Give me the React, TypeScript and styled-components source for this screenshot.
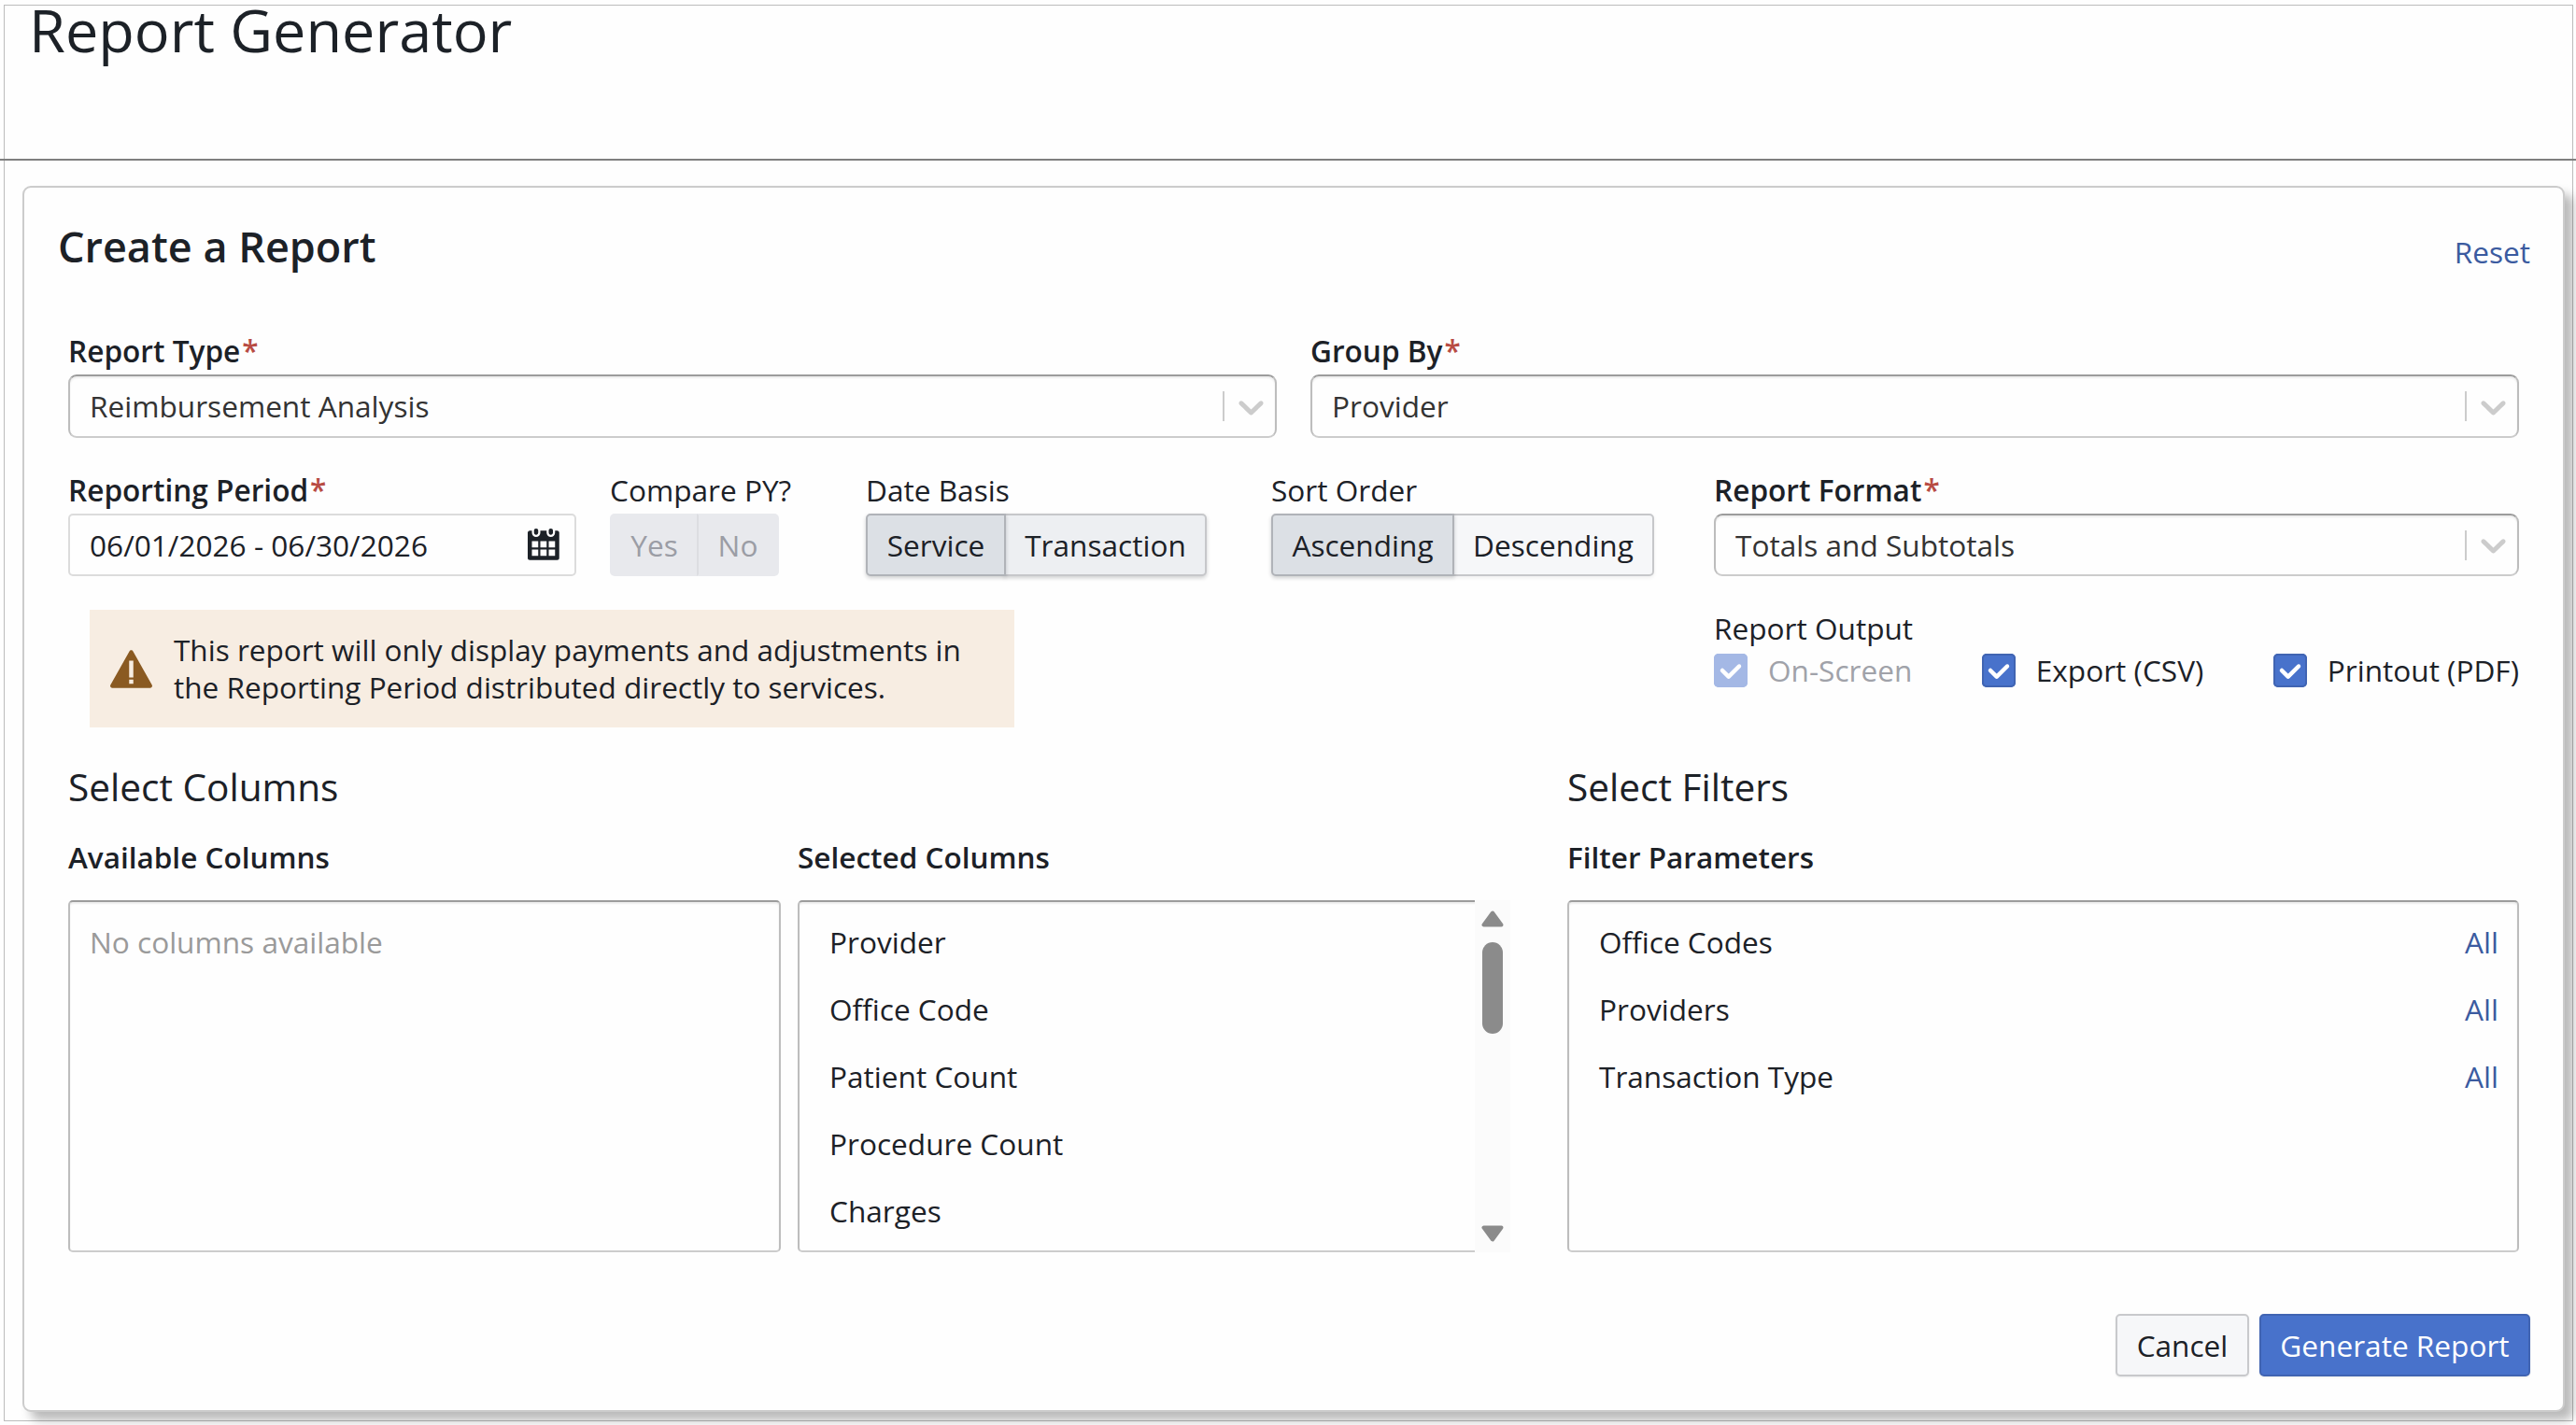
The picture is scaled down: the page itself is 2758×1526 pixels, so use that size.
import React from 'react';
import styled, { createGlobalStyle, css } from 'styled-components';

const GlobalStyle = createGlobalStyle`
    * {
        box-sizing: border-box;
    }

    body {
        margin: 0;
        background: #fefefe;
        color: #1c2127;
        font-family: 'Open Sans', 'Noto Sans', sans-serif;
        font-size: 31.6px;
        line-height: 40px;
        white-space: nowrap;
    }
`

const Page = styled.div`
    height: 1526px;
    padding: 5px 3px 0 4px;
    overflow: hidden;
`

const Frame = styled.div`
    height: 1517px;
    border: 1px solid #bcbcbc;
`

const TopBar = styled.header`
    height: 166px;
    margin: 0 -4px 0 -5px;
    padding-left: 31px;
    border-bottom: 2px solid #7f7f7f;
`

const PageTitle = styled.h1`
    margin: 0;
    font-size: 63px;
    font-weight: 400;
    line-height: 51px;
`

const Card = styled.main`
    width: 2722px;
    height: 1313px;
    margin: 27px 0 0 19px;
    padding-top: 33px;
    background: #fefefe;
    border: 2px solid #cccccc;
    border-radius: 9px;
    box-shadow: 9px 9px 11px rgba(0, 0, 0, 0.27);
`

const CardHeader = styled.div`
    display: flex;
    align-items: center;
    justify-content: space-between;
    height: 60px;
    padding: 0 35px 0 36px;
`

const CardTitle = styled.h2`
    margin: 0;
    font-size: 45px;
    font-weight: 600;
    line-height: 60px;
`

const Link = styled.a`
    color: #3b5ba0;
    text-decoration: none;
    cursor: pointer;
`

const ResetLink = styled(Link)`
    padding-top: 11px;
`

const Form = styled.div`
    display: flex;
    flex-direction: column;
    gap: 36px;
    padding: 62px 47px 0;
`

const TypeRow = styled.div`
    display: grid;
    grid-template-columns: 1fr 1fr;
    gap: 36px;
`

const OptionsRow = styled.div`
    display: grid;
    grid-template-columns: 544px 238px 398px 438px 1fr;
    gap: 36px;
`

const NoticeRow = styled.div`
    display: flex;
    justify-content: space-between;
    height: 126px;
    padding-left: 23px;
`

const FieldLabel = styled.div<{ $required?: boolean }>`
    margin-bottom: 5px;
    font-weight: ${(props) => (props.$required ? 600 : 400)};
`

const Asterisk = styled.span`
    margin-left: 2px;
    color: #b84c44;
`

const SelectBox = styled.div<{ $height: number }>`
    display: flex;
    align-items: center;
    height: ${(props) => props.$height}px;
    padding: 0 3px 0 21px;
    color: #333333;
    border: 2px solid;
    border-color: #9c9c9c #bdbdbd #cccccc;
    border-radius: 9px;
    box-shadow: inset 0 2px 2px rgba(0, 0, 0, 0.07);
`

const SelectValue = styled.span`
    flex: 1;
`

const SelectDivider = styled.span`
    width: 2px;
    height: 32px;
    margin-right: 6px;
    background: #cccccc;
`

const DateInput = styled.div`
    display: flex;
    align-items: center;
    justify-content: space-between;
    height: 67px;
    padding: 0 14px 0 21px;
    border: 2px solid #dcdcdc;
    border-radius: 5px;
`

const ButtonGroup = styled.div`
    display: flex;
`

const ToggleButton = styled.button<{ $width: number; $active?: boolean; $soft?: boolean }>`
    width: ${(props) => props.$width}px;
    height: 67px;
    padding: 0;
    font: inherit;
    color: #1c2127;
    background: ${(props) => (props.$soft ? '#edeff2' : '#f6f7f9')};
    border: 2px solid #c6c7ca;
    border-radius: 0 5px 5px 0;
    box-shadow: 0 2px 4px rgba(17, 20, 24, ${(props) => (props.$soft ? 0.2 : 0.06)});

    &:first-child {
        border-radius: 5px 0 0 5px;
    }

    &:not(:first-child) {
        margin-left: -2px;
    }

    ${(props) => props.$active && css`
        position: relative;
        background: #dce0e5;
        border-color: #b0b3b8;
        box-shadow: 0 2px 4px rgba(17, 20, 24, 0.2);
    `}

    &:disabled {
        color: #9b9da5;
        background: #e8e9ed;
        border-color: #e8e9ed;
        box-shadow: none;
    }

    &:disabled:not(:first-child) {
        border-left-color: #dcdde1;
    }
`

const Notice = styled.div`
    display: flex;
    align-items: center;
    gap: 23px;
    width: 990px;
    padding-left: 22px;
    font-size: 31.54px;
    background: #f7ede2;
`

const Output = styled.div`
    width: 862px;
`

const CheckList = styled.div`
    display: flex;
    justify-content: space-between;
    height: 36px;
    margin-top: 7px;
`

const CheckLabel = styled.label<{ $disabled?: boolean }>`
    display: flex;
    align-items: center;
    gap: 22px;
    color: ${(props) => (props.$disabled ? '#a0a2a9' : '#1c2127')};
`

const CheckMark = styled.span<{ $disabled?: boolean }>`
    display: flex;
    width: 36px;
    height: 36px;
    background: ${(props) => (props.$disabled ? '#a4b8e5' : '#4872cb')};
    border-radius: 5px;
    box-shadow: inset 0 0 0 2px ${(props) => (props.$disabled ? '#a4b8e5' : '#4064b2')};
`

const Lists = styled.div`
    display: grid;
    grid-template-columns: 763px 763px 1fr;
    column-gap: 18px;
    padding: 38px 47px 0;
`

const FilterColumn = styled.section`
    margin-left: 43px;
`

const SectionTitle = styled.h3`
    height: 50px;
    margin: 0;
    font-size: 40.6px;
    font-weight: 400;
    line-height: 51px;
`

const ListTitle = styled.h4`
    margin: 31px 0 26px;
    font-size: 31.5px;
    font-weight: 600;
`

const ListBox = styled.div<{ $scroll?: boolean }>`
    display: flex;
    height: 377px;
    border: 2px solid;
    border-color: #9c9c9c #bdbdbd #cccccc;
    border-radius: 5px;
    box-shadow: inset 0 2px 2px rgba(0, 0, 0, 0.07);

    ${(props) => props.$scroll && css`
        border-right: none;
        border-radius: 5px 0 0 5px;
    `}
`

const Items = styled.ul`
    flex: 1;
    margin: 0;
    padding: 7px 20px 0 32px;
    list-style: none;
`

const Item = styled.li`
    display: flex;
    justify-content: space-between;
    height: 72px;
    line-height: 72px;
`

const EmptyText = styled.div`
    padding: 7px 0 0 21px;
    color: #9a9a9a;
    line-height: 72px;
`

const ScrollBar = styled.div`
    display: flex;
    flex-direction: column;
    align-items: center;
    width: 38px;
    height: 377px;
    margin: -2px 0;
    padding: 11px 0;
    background: #fbfbfb;
`

const ScrollThumb = styled.div`
    width: 22px;
    height: 98px;
    margin: 16px 0 auto;
    background: #8b8b8b;
    border-radius: 11px;
`

const Footer = styled.footer`
    display: flex;
    justify-content: flex-end;
    gap: 11px;
    padding: 66px 35px 0;
`

const Button = styled.button<{ $primary?: boolean }>`
    width: ${(props) => (props.$primary ? 290 : 143)}px;
    height: 67px;
    padding: 0;
    font: inherit;
    color: ${(props) => (props.$primary ? '#ffffff' : '#1c2127')};
    background: ${(props) => (props.$primary ? '#4872cb' : '#f6f7f9')};
    border: 2px solid ${(props) => (props.$primary ? '#4064b2' : '#c8c9cc')};
    border-radius: 5px;
    box-shadow: 0 1px 2px rgba(17, 20, 24, 0.08);
`

const CalendarIcon: React.FC = () => (
    <svg width="36" height="36" viewBox="0 0 16 16" fill="#1c2127">
        <path fillRule="evenodd" d="M11 3c.6 0 1-.5 1-1V1c0-.6-.4-1-1-1s-1 .4-1 1v1c0 .5.4 1 1 1zm3-2h-1v1c0 1.1-.9 2-2 2s-2-.9-2-2V1H6v1c0 1.1-.9 2-2 2s-2-.9-2-2V1H1c-.6 0-1 .5-1 1v12c0 .6.4 1 1 1h13c.6 0 1-.4 1-1V2c0-.6-.6-1-1-1zM5 13H2v-3h3v3zm0-4H2V6h3v3zm4 4H6v-3h3v3zm0-4H6V6h3v3zm4 4h-3v-3h3v3zm0-4h-3V6h3v3zM4 3c.6 0 1-.5 1-1V1c0-.6-.4-1-1-1S3 .4 3 1v1c0 .5.4 1 1 1z" />
    </svg>
)

const WarningIcon: React.FC = () => (
    <svg width="45" height="45" viewBox="0 0 20 20" fill="#8a5a22">
        <path fillRule="evenodd" d="M19.86 17.52l.01-.01-9-16-.01.01C10.69 1.21 10.37 1 10 1s-.69.21-.86.52l-.01-.01-9 16 .01.01c-.08.15-.14.31-.14.48 0 .55.45 1 1 1h18c.55 0 1-.45 1-1 0-.17-.06-.33-.14-.48zM11 17H9v-2h2v2zm0-3H9V6h2v8z" />
    </svg>
)

const ChevronIcon: React.FC = () => (
    <svg width="45" height="45" viewBox="0 0 20 20" fill="#cccccc">
        <path d="M4.516 7.548c0.436-0.446 1.043-0.481 1.576 0l3.908 3.747 3.908-3.747c0.533-0.481 1.141-0.446 1.574 0 0.436 0.445 0.408 1.197 0 1.615-0.406 0.418-4.695 4.502-4.695 4.502-0.217 0.223-0.502 0.335-0.787 0.335s-0.57-0.112-0.789-0.335c0 0-4.287-4.084-4.695-4.502s-0.436-1.17 0-1.615z" />
    </svg>
)

const CheckIcon: React.FC = () => (
    <svg width="36" height="36" viewBox="0 0 16 16" fill="#ffffff">
        <path d="M12 5c-.28 0-.53.11-.71.29L7 9.59l-2.29-2.3a1.003 1.003 0 00-1.42 1.42l3 3c.18.18.43.29.71.29s.53-.11.71-.29l5-5A1.003 1.003 0 0012 5z" />
    </svg>
)

const ArrowIcon: React.FC<{ down?: boolean }> = (props) => (
    <svg width="24" height="18" viewBox="0 0 24 18" fill="#8b8b8b" stroke="#8b8b8b" strokeWidth="4" strokeLinejoin="round">
        <path d={props.down ? 'M2.5 2.5h19L12 15.5z' : 'M2.5 15.5h19L12 2.5z'} />
    </svg>
)

const Label: React.FC<{ text: string; required?: boolean }> = (props) => (
    <FieldLabel $required={props.required}>
        {props.text}
        {props.required && <Asterisk>*</Asterisk>}
    </FieldLabel>
)

const Select: React.FC<{ label: string; value: string; height?: number }> = (props) => (
    <div>
        <Label text={props.label} required />
        <SelectBox $height={props.height ?? 68}>
            <SelectValue>{props.value}</SelectValue>
            <SelectDivider />
            <ChevronIcon />
        </SelectBox>
    </div>
)

const Check: React.FC<{ label: string; disabled?: boolean }> = (props) => (
    <CheckLabel $disabled={props.disabled}>
        <CheckMark $disabled={props.disabled}>
            <CheckIcon />
        </CheckMark>
        {props.label}
    </CheckLabel>
)

const App: React.FC = () => {
    const selectedColumns = ['Provider', 'Office Code', 'Patient Count', 'Procedure Count', 'Charges'];
    const filters = ['Office Codes', 'Providers', 'Transaction Type'];

    return (
        <Page>
            <GlobalStyle />
            <Frame>
                <TopBar>
                    <PageTitle>Report Generator</PageTitle>
                </TopBar>
                <Card>
                    <CardHeader>
                        <CardTitle>Create a Report</CardTitle>
                        <ResetLink>Reset</ResetLink>
                    </CardHeader>
                    <Form>
                        <TypeRow>
                            <Select label="Report Type" value="Reimbursement Analysis" />
                            <Select label="Group By" value="Provider" />
                        </TypeRow>
                        <OptionsRow>
                            <div>
                                <Label text="Reporting Period" required />
                                <DateInput>
                                    06/01/2026 - 06/30/2026
                                    <CalendarIcon />
                                </DateInput>
                            </div>
                            <div>
                                <Label text="Compare PY?" />
                                <ButtonGroup>
                                    <ToggleButton $width={95} disabled>Yes</ToggleButton>
                                    <ToggleButton $width={88} disabled>No</ToggleButton>
                                </ButtonGroup>
                            </div>
                            <div>
                                <Label text="Date Basis" />
                                <ButtonGroup>
                                    <ToggleButton $width={150} $active>Service</ToggleButton>
                                    <ToggleButton $width={217} $soft>Transaction</ToggleButton>
                                </ButtonGroup>
                            </div>
                            <div>
                                <Label text="Sort Order" />
                                <ButtonGroup>
                                    <ToggleButton $width={196} $active>Ascending</ToggleButton>
                                    <ToggleButton $width={216}>Descending</ToggleButton>
                                </ButtonGroup>
                            </div>
                            <Select label="Report Format" value="Totals and Subtotals" height={67} />
                        </OptionsRow>
                        <NoticeRow>
                            <Notice>
                                <WarningIcon />
                                <div>
                                    This report will only display payments and adjustments in
                                    <br />
                                    the Reporting Period distributed directly to services.
                                </div>
                            </Notice>
                            <Output>
                                <div>Report Output</div>
                                <CheckList>
                                    <Check label="On-Screen" disabled />
                                    <Check label="Export (CSV)" />
                                    <Check label="Printout (PDF)" />
                                </CheckList>
                            </Output>
                        </NoticeRow>
                    </Form>
                    <Lists>
                        <section>
                            <SectionTitle>Select Columns</SectionTitle>
                            <ListTitle>Available Columns</ListTitle>
                            <ListBox>
                                <EmptyText>No columns available</EmptyText>
                            </ListBox>
                        </section>
                        <section>
                            <SectionTitle />
                            <ListTitle>Selected Columns</ListTitle>
                            <ListBox $scroll>
                                <Items>
                                    {selectedColumns.map((name) => <Item key={name}>{name}</Item>)}
                                </Items>
                                <ScrollBar>
                                    <ArrowIcon />
                                    <ScrollThumb />
                                    <ArrowIcon down />
                                </ScrollBar>
                            </ListBox>
                        </section>
                        <FilterColumn>
                            <SectionTitle>Select Filters</SectionTitle>
                            <ListTitle>Filter Parameters</ListTitle>
                            <ListBox>
                                <Items>
                                    {filters.map((name) => (
                                        <Item key={name}>
                                            {name}
                                            <Link>All</Link>
                                        </Item>
                                    ))}
                                </Items>
                            </ListBox>
                        </FilterColumn>
                    </Lists>
                    <Footer>
                        <Button>Cancel</Button>
                        <Button $primary>Generate Report</Button>
                    </Footer>
                </Card>
            </Frame>
        </Page>
    )
}

export default App;
